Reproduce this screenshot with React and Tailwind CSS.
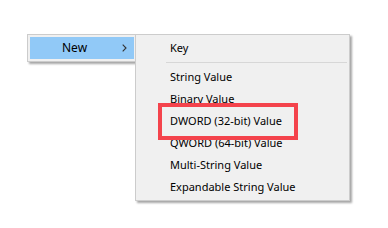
import React from 'react';

const items = [
  'String Value',
  'Binary Value',
  'DWORD (32-bit) Value',
  'QWORD (64-bit) Value',
  'Multi-String Value',
  'Expandable String Value',
];

function Chevron() {
  return (
    <svg width="5" height="8" viewBox="0 0 5 8" className="text-[#333]">
      <path d="M0.7 0.7 L4 4 L0.7 7.3" fill="none" stroke="currentColor" strokeWidth="1.1" />
    </svg>
  );
}

export default function App() {
  return (
    <div
      className="w-[388px] h-[228px] bg-white pt-[34px] pl-[27px] flex items-start text-[11px] text-black"
      style={{ fontFamily: '"Noto Sans", "Segoe UI", sans-serif' }}
    >
      {/* parent menu */}
      <div className="w-[110px] border border-[#cccccc] bg-[#f0f0f0] py-[2px] px-[2px] shadow-[2px_2px_2px_rgba(0,0,0,0.35)]">
        <div className="h-[22px] bg-[#91c9f7] flex items-center pl-[32px] pr-[7px]">
          <span className="flex-1 leading-none text-[12px]">New</span>
          <Chevron />
        </div>
      </div>

      {/* submenu */}
      <div className="relative z-10 -ml-[2px] w-[215px] border border-[#cccccc] bg-[#f0f0f0] py-[2px] shadow-[2px_2px_2px_rgba(0,0,0,0.35)]">
        <div className="h-[22px] flex items-center pl-[34px]">Key</div>
        <div className="h-[7px] flex items-center pl-[30px] pr-[2px]">
          <div className="h-px w-full bg-[#d7d7d7]" />
        </div>
        {items.map((label) => (
          <div key={label} className="h-[22px] flex items-center pl-[34px] whitespace-nowrap">
            {label}
          </div>
        ))}
        <div className="absolute left-[22px] top-[68px] w-[140px] h-[37px] border-4 border-[#f4434c] pointer-events-none" />
      </div>
    </div>
  );
}
